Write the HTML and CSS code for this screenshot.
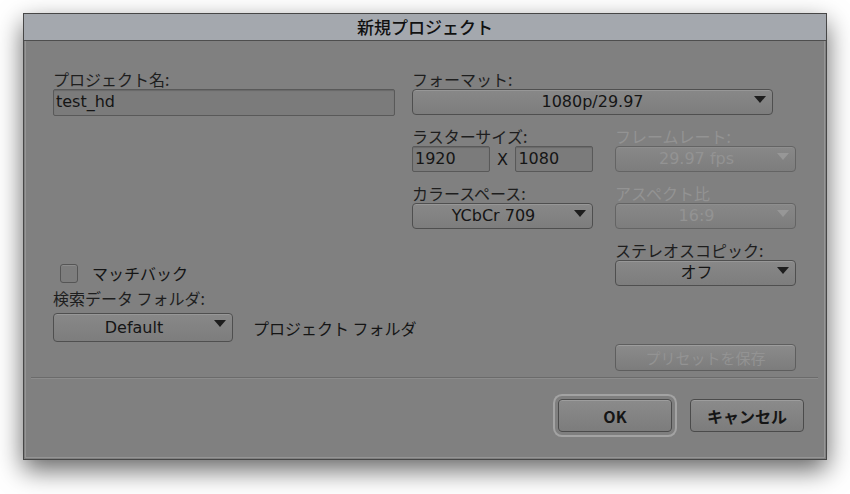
FILE: index.html
```html
<!DOCTYPE html>
<html lang="ja">
<head>
  <meta charset="UTF-8">
  <title>新規プロジェクト</title>
  <link rel="stylesheet" href="styles.css">
</head>
<body>
  <div class="dialog">
    <div class="titlebar">新規プロジェクト</div>
    <div class="panel">
      <div class="content">
        <div class="left">
          <label class="lbl">プロジェクト名:</label>
          <div class="textbox name">test_hd</div>

          <div class="check-row">
            <span class="checkbox"></span>
            <span>マッチバック</span>
          </div>

          <label class="lbl search">検索データ フォルダ:</label>
          <div class="folder-row">
            <div class="select folder"><span class="val">Default</span><i class="arrow"></i></div>
            <span class="folder-name">プロジェクト フォルダ</span>
          </div>
        </div>

        <div class="right">
          <div class="field span2">
            <label class="lbl">フォーマット:</label>
            <div class="select format"><span class="val">1080p/29.97</span><i class="arrow"></i></div>
          </div>

          <div class="field">
            <label class="lbl">ラスターサイズ:</label>
            <div class="raster">
              <div class="textbox small">1920</div>
              <span class="times">X</span>
              <div class="textbox small">1080</div>
            </div>
          </div>
          <div class="field disabled">
            <label class="lbl">フレームレート:</label>
            <div class="select"><span class="val">29.97 fps</span><i class="arrow"></i></div>
          </div>

          <div class="field">
            <label class="lbl">カラースペース:</label>
            <div class="select"><span class="val">YCbCr 709</span><i class="arrow"></i></div>
          </div>
          <div class="field disabled">
            <label class="lbl">アスペクト比</label>
            <div class="select"><span class="val">16:9</span><i class="arrow"></i></div>
          </div>

          <div class="field"></div>
          <div class="field">
            <label class="lbl">ステレオスコピック:</label>
            <div class="select"><span class="val">オフ</span><i class="arrow"></i></div>
          </div>

          <div></div>
          <div class="preset-wrap">
            <button class="btn preset" disabled>プリセットを保存</button>
          </div>
        </div>
      </div>

      <div class="separator"></div>

      <div class="footer">
        <button class="btn action default">OK</button>
        <button class="btn action">キャンセル</button>
      </div>
    </div>
  </div>
</body>
</html>
```

FILE: styles.css
```css
html {
  background: #fff;
}

body {
  margin: 0;
  padding: 13px 0 34px 23px;
  font-family: "DejaVu Sans", "Noto Sans CJK JP", sans-serif;
  font-size: 16px;
  color: #151515;
}

.dialog {
  width: 802px;
  border: 1px solid #474747;
  background: #808080;
  box-shadow: 0 10px 24px rgba(0,0,0,0.6);
}

.titlebar {
  height: 26px;
  line-height: 26px;
  text-align: center;
  background: #a4a8ae;
  border-bottom: 1px solid #4e4e4e;
  font-family: "Noto Sans CJK JP", sans-serif;
  font-size: 17px;
  font-weight: 500;
  color: #111;
}

.panel {
  margin: 0 1px 1px 1px;
  border: 1px solid #959595;
  border-top: none;
}

.content {
  display: flex;
  padding: 32px 0 0 27px;
}

.lbl {
  display: block;
  height: 16px;
  line-height: 12px;
  font-family: "Noto Sans CJK JP", sans-serif;
  font-size: 16px;
  color: #1e1e1e;
  white-space: nowrap;
}

/* left column */
.left {
  width: 342px;
  flex-shrink: 0;
  margin-right: 17px;
}

.textbox {
  box-sizing: border-box;
  height: 26px;
  line-height: 24px;
  padding-left: 2px;
  border: 1px solid #595959;
  border-radius: 2px;
  background: #7b7b7b;
  box-shadow: inset 0 1px 1px rgba(0,0,0,0.15);
}

.textbox.name {
  width: 342px;
  height: 27px;
}

.check-row {
  display: flex;
  align-items: center;
  height: 20px;
  margin-top: 147px;
  padding-left: 7px;
  font-family: "Noto Sans CJK JP", sans-serif;
}

.checkbox {
  width: 16px;
  height: 17px;
  margin-right: 14px;
  border: 1px solid #555;
  border-radius: 3px;
  background: #7d7d7d;
  box-shadow: inset 0 1px 0 #8c8c8c;
}

.lbl.search {
  margin-top: 9px;
}

.folder-row {
  display: flex;
  align-items: center;
  margin-top: 5px;
  white-space: nowrap;
}

.folder-name {
  margin-left: 20px;
  font-family: "Noto Sans CJK JP", sans-serif;
}

/* right column */
.right {
  display: grid;
  grid-template-columns: 181px 181px;
  column-gap: 22px;
  row-gap: 15px;
  align-content: start;
}

.span2 {
  grid-column: span 2;
}

.select {
  position: relative;
  flex-shrink: 0;
  box-sizing: border-box;
  height: 26px;
  line-height: 24px;
  padding-right: 18px;
  text-align: center;
  border: 1px solid #4f4f4f;
  border-radius: 4px;
  background: linear-gradient(#888, #7d7d7d);
  box-shadow: inset 0 1px 0 #979797;
}

.select.format {
  width: 361px;
  padding-right: 0;
}

.select.folder {
  width: 180px;
  height: 29px;
  line-height: 27px;
}

.arrow {
  position: absolute;
  right: 6px;
  top: 6px;
  width: 0;
  height: 0;
  border-left: 6px solid transparent;
  border-right: 6px solid transparent;
  border-top: 7px solid #1e1e1e;
}

.raster {
  display: flex;
  align-items: center;
}

.textbox.small {
  width: 78px;
}

.times {
  width: 26px;
  text-align: center;
}

.disabled .lbl,
.disabled .val {
  color: #939393;
}

.disabled .select {
  border-color: #646464;
  box-shadow: inset 0 1px 0 #8e8e8e;
}

.disabled .arrow {
  border-top-color: #979797;
}

.preset-wrap {
  margin-top: 43px;
}

.btn {
  box-sizing: border-box;
  font-family: "Noto Sans CJK JP", sans-serif;
  font-size: 15px;
  color: #151515;
  border: 1px solid #4b4b4b;
  border-radius: 4px;
  background: linear-gradient(#8b8b8b, #7c7c7c);
  box-shadow: inset 0 1px 0 #9d9d9d;
  padding: 0;
}

.btn.preset {
  width: 181px;
  height: 27px;
  color: #939393;
  border-color: #5e5e5e;
}

.separator {
  height: 1px;
  margin: 6px 6px 0 5px;
  background: #6b6b6b;
  border-bottom: 1px solid #8c8c8c;
}

.footer {
  display: flex;
  justify-content: flex-end;
  gap: 18px;
  padding: 20px 20px 25px 0;
}

.btn.action {
  width: 114px;
  height: 33px;
  font-weight: bold;
  font-size: 16px;
}

.btn.default {
  box-shadow: inset 0 1px 0 #9d9d9d, 0 0 0 3px #7f7f7f, 0 0 0 5px #a3a3a3;
}
```
